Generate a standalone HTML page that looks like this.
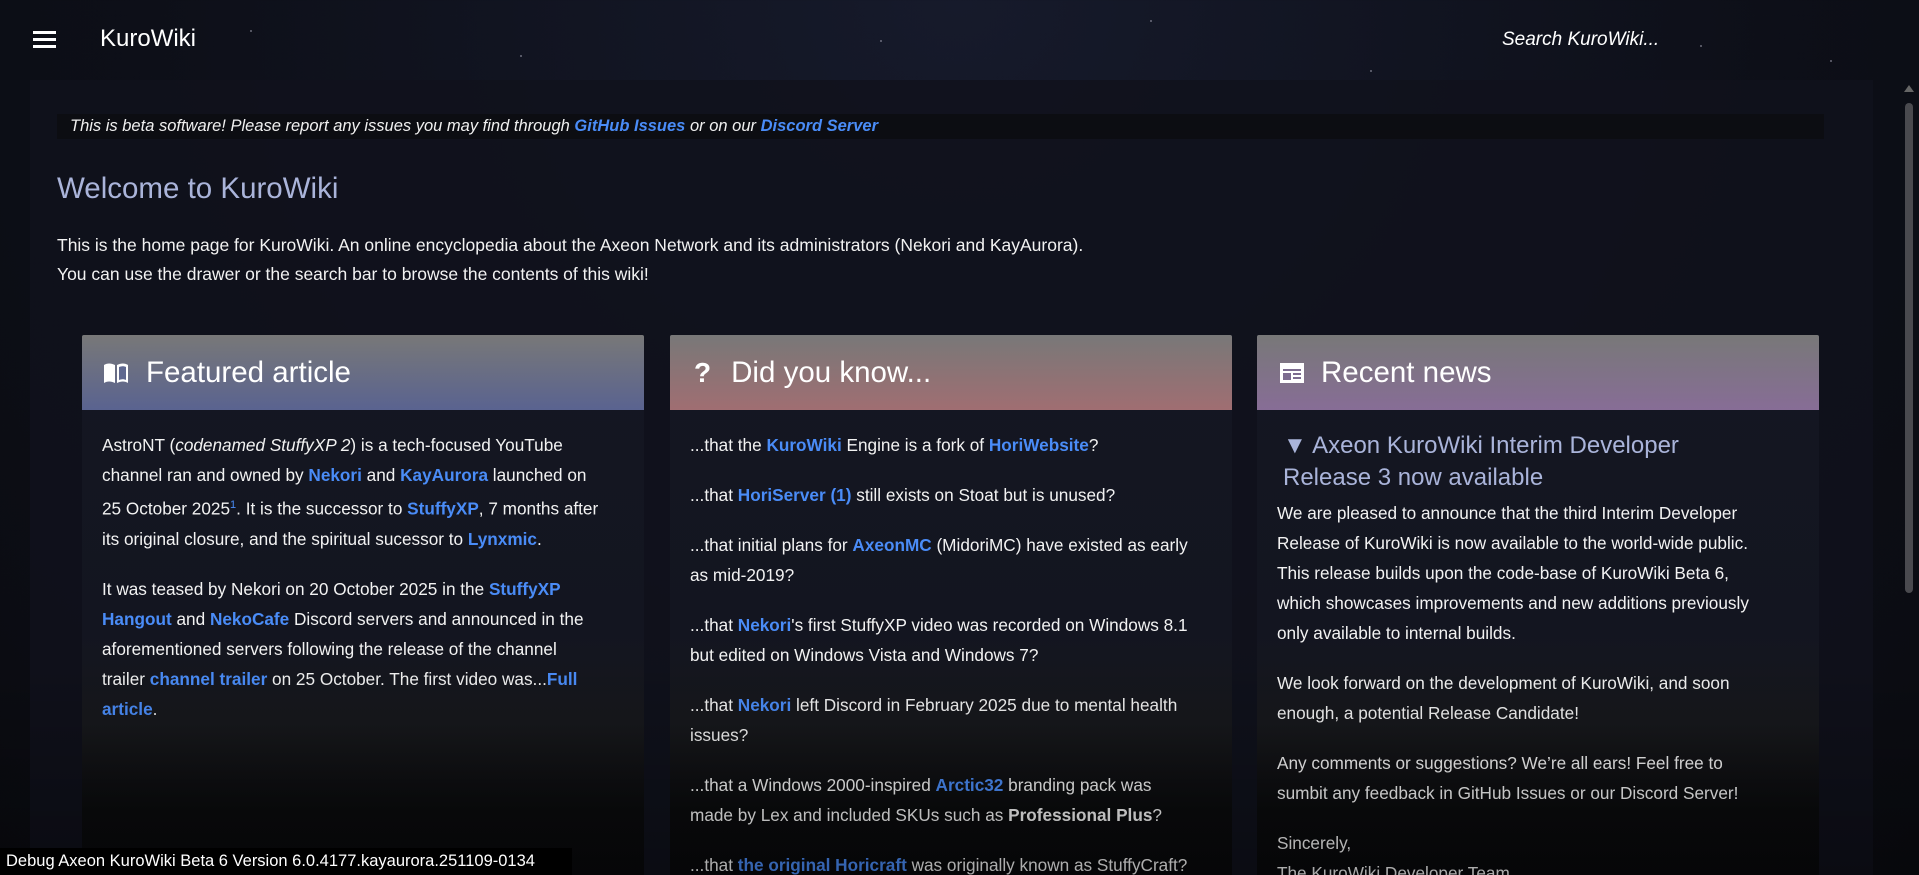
<!DOCTYPE html>
<html><head><meta charset="utf-8"><style>
*{box-sizing:border-box;margin:0;padding:0}
html,body{width:1919px;height:875px;overflow:hidden}
body{font-family:"Liberation Sans",sans-serif;color:#f2f2f2;background:radial-gradient(ellipse at 50% 0%,#161a2b 0%,#0d0f18 60%,#0a0b10 100%);position:relative}
.star{position:absolute;width:2px;height:2px;background:#aab;border-radius:1px;opacity:.6}
.hdr{position:absolute;left:0;top:0;width:1919px;height:80px}
.ham{position:absolute;left:33px;top:31px;width:23px}
.ham i{display:block;height:3px;background:#fff;margin-bottom:4px}
.title{position:absolute;left:100px;top:25px;font-size:24px;color:#fff}
.search{position:absolute;left:1502px;top:29px;font-size:19px;font-style:italic;color:#fff}
.panel{position:absolute;left:30px;top:80px;width:1843px;height:795px;background:rgba(16,18,28,.85)}
.sb{position:absolute;left:1903px;top:85px;width:12px;height:790px}
.sb .th{position:absolute;left:2px;top:18px;width:8px;height:490px;background:#4a4a4f;border-radius:4px}
.sb .up{position:absolute;left:1px;top:0;width:0;height:0;border-left:5px solid transparent;border-right:5px solid transparent;border-bottom:7px solid #666}
.beta{position:absolute;left:57px;top:114px;width:1767px;height:25px;background:#0c0d12;font-style:italic;font-size:16.5px;padding:3px 13px;color:#f0f0f0}
a{color:#4a8cf7;text-decoration:none;font-weight:bold}
h1{position:absolute;left:57px;top:172px;font-size:29.5px;font-weight:normal;color:#aab4da}
.intro{position:absolute;left:57px;top:231px;font-size:17.5px;line-height:29px}
.card{position:absolute;top:335px;width:562px;height:540px;background:linear-gradient(#141722 0%,#131520 55%,#17181c 72%,#0a0b0d 88%,#08090b 100%)}
.ch{height:75px;display:flex;align-items:center;padding-left:20px;font-size:29.5px;color:#fff;border-radius:2px 2px 0 0}
.ch svg{margin-right:16px}
.cb{padding:20px 42px 0 20px;font-size:17.2px;line-height:30px}
.cb p{margin-bottom:20px}
h3{font-size:24px;font-weight:normal;color:#aab4da;line-height:32px;margin:0 0 4px 6px}
.dbg{position:absolute;left:0;top:848px;width:572px;height:27px;background:#000;color:#fff;font-size:16.5px;padding:4px 6px}
.fog{position:absolute;left:0;top:660px;width:1919px;height:215px;background:linear-gradient(rgba(0,0,0,0),rgba(0,0,0,.3));pointer-events:none}
</style></head><body>
<div class="star" style="left:250px;top:30px"></div><div class="star" style="left:520px;top:55px"></div><div class="star" style="left:1150px;top:20px"></div><div class="star" style="left:1370px;top:70px"></div><div class="star" style="left:1700px;top:45px"></div><div class="star" style="left:1830px;top:60px"></div><div class="star" style="left:880px;top:40px"></div>
<div class="hdr"><div class="ham"><i></i><i></i><i></i></div><div class="title">KuroWiki</div><div class="search">Search KuroWiki...</div></div>
<div class="panel"></div>
<div class="sb"><div class="up"></div><div class="th"></div></div>
<div class="beta">This is beta software! Please report any issues you may find through <a>GitHub Issues</a> or on our <a>Discord Server</a></div>
<h1>Welcome to KuroWiki</h1>
<div class="intro">This is the home page for KuroWiki. An online encyclopedia about the Axeon Network and its administrators (Nekori and KayAurora).<br>You can use the drawer or the search bar to browse the contents of this wiki!</div>

<div class="card" style="left:82px"><div class="ch" style="background:linear-gradient(#787878,#5a6390)"><svg width="28" height="24" viewBox="0 0 28 24"><path d="M2 4c3-2 7-2 11 0v18c-4-2-8-2-11 0z M15 4c4-2 8-2 11 0v18c-3-2-7-2-11 0z" fill="#fff"/><path d="M17 6c3-1 5-1 7 0v13c-2-1-4-1-7 0z" fill="#5f6890"/></svg>Featured article</div>
<div class="cb"><p>AstroNT (<i>codenamed StuffyXP 2</i>) is a tech-focused YouTube channel ran and owned by <a>Nekori</a> and <a>KayAurora</a> launched on 25 October 2025<sup style="font-size:11px;color:#4a8cf7">1</sup>. It is the successor to <a>StuffyXP</a>, 7 months after its original closure, and the spiritual sucessor to <a>Lynxmic</a>.</p><p>It was teased by Nekori on 20 October 2025 in the <a>StuffyXP Hangout</a> and <a>NekoCafe</a> Discord servers and announced in the aforementioned servers following the release of the channel trailer <a>channel trailer</a> on 25 October. The first video was...<a>Full article</a>.</p></div></div>

<div class="card" style="left:670px"><div class="ch" style="background:linear-gradient(#787878,#a06e72)"><span style="font-weight:bold;font-size:28px;margin-right:20px;margin-left:4px">?</span>Did you know...</div>
<div class="cb"><p>...that the <a>KuroWiki</a> Engine is a fork of <a>HoriWebsite</a>?</p><p>...that <a>HoriServer (1)</a> still exists on Stoat but is unused?</p><p>...that initial plans for <a>AxeonMC</a> (MidoriMC) have existed as early as mid-2019?</p><p>...that <a>Nekori</a>'s first StuffyXP video was recorded on Windows 8.1 but edited on Windows Vista and Windows 7?</p><p>...that <a>Nekori</a> left Discord in February 2025 due to mental health issues?</p><p>...that a Windows 2000-inspired <a>Arctic32</a> branding pack was made by Lex and included SKUs such as <b>Professional Plus</b>?</p><p>...that <a>the original Horicraft</a> was originally known as StuffyCraft?</p></div></div>

<div class="card" style="left:1257px"><div class="ch" style="background:linear-gradient(#787878,#876d96)"><svg width="26" height="24" viewBox="0 0 26 24" style="margin-left:2px"><rect x="1" y="2" width="24" height="20" fill="#fff"/><rect x="4" y="8" width="18" height="2" fill="#7d6c90"/><rect x="4" y="12" width="8" height="7" fill="#7d6c90"/><rect x="14" y="12" width="8" height="2" fill="#7d6c90"/><rect x="14" y="16" width="8" height="2" fill="#7d6c90"/></svg>Recent news</div>
<div class="cb"><h3>▼ Axeon KuroWiki Interim Developer<br>Release 3 now available</h3><p>We are pleased to announce that the third Interim Developer Release of KuroWiki is now available to the world-wide public. This release builds upon the code-base of KuroWiki Beta 6, which showcases improvements and new additions previously only available to internal builds.</p><p>We look forward on the development of KuroWiki, and soon enough, a potential Release Candidate!</p><p>Any comments or suggestions? We’re all ears! Feel free to sumbit any feedback in GitHub Issues or our Discord Server!</p><p>Sincerely,<br>The KuroWiki Developer Team</p></div></div>
<div class="fog"></div>
<div class="dbg">Debug Axeon KuroWiki Beta 6 Version 6.0.4177.kayaurora.251109-0134</div>
</body></html>
